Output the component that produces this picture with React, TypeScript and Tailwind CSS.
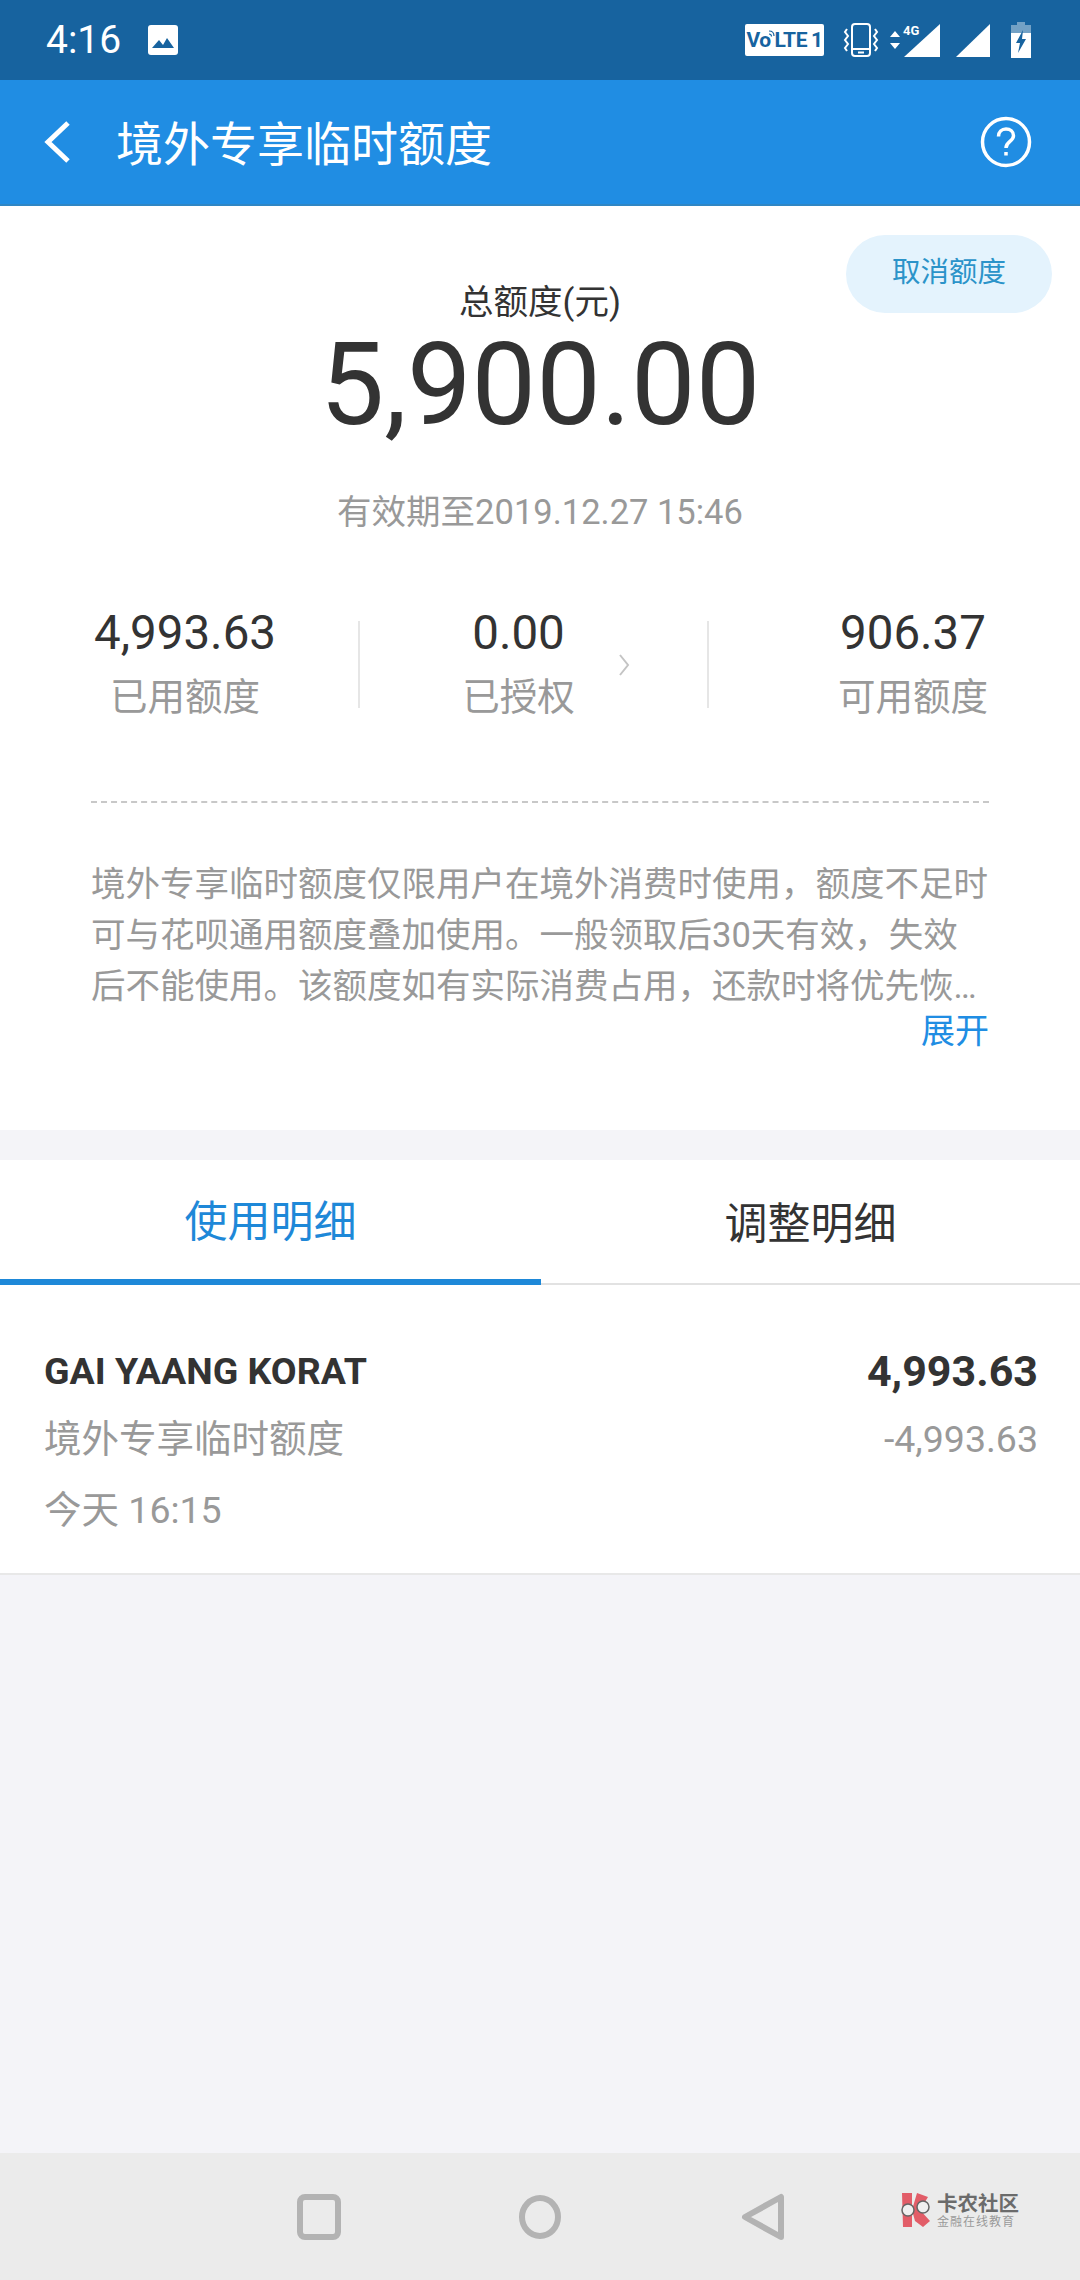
import React from "react";

const font = { fontFamily: "Roboto, 'Noto Sans CJK SC', sans-serif" };

function StatusIcons() {
  return (
    <div className="flex items-center gap-[13px]">
      <div className="flex h-[32px] w-[79px] items-center justify-center rounded-[2px] bg-white text-[21px] leading-none font-bold tracking-[-0.5px] text-[#17639f]">
        <span>Vo</span>
        <svg width="6" height="10" viewBox="0 0 6 10" fill="none" stroke="#17639f" strokeWidth="1.200" className="-mt-[10px] -ml-[2px]">
          <path d="M0 1c3 0 5 2 5 5" />
          <path d="M0 4c1.500 0 2.500 1 2.500 2.500" />
        </svg>
        <span>LTE</span>
        <span className="ml-[4px]">1</span>
      </div>
      <svg width="36" height="36" viewBox="0 0 36 36" fill="none" stroke="white" strokeWidth="2" className="ml-[6px]">
        <rect x="9" y="2" width="18" height="32" rx="3" />
        <path d="M9 27h18" />
        <path d="M15 30.500h6" />
        <path d="M4 7 2 10l3 4-3 4 3 4-3 4 2 3" />
        <path d="M32 7l2 3-3 4 3 4-3 4 3 4-2 3" />
      </svg>
      <svg width="52" height="36" viewBox="4 0 52 36" className="-ml-[2px]">
        <path d="M9 9l5 6H4zM9 27l5-6H4z" fill="white" />
        <path d="M54 2v33H18z" fill="white" />
        <text x="17" y="13" fontSize="13" fontWeight="700" fill="white" fontFamily="Roboto, sans-serif">
          4G
        </text>
      </svg>
      <svg width="36" height="36" viewBox="0 0 36 36">
        <path d="M35 2v33H1z" fill="white" />
      </svg>
      <svg width="22" height="36" viewBox="0 0 22 36" className="ml-[6px]">
        <path d="M7 0h8v3h6v33H1V3h6z" fill="white" fillOpacity="0.4" />
        <path d="M1 11h20v25H1z" fill="white" />
        <path d="M13 8 6 21h4l-2 10 8-14h-4z" fill="#17639f" />
      </svg>
    </div>
  );
}

function Stat({ value, label }: { value: string; label: string }) {
  return (
    <div className="flex flex-col items-center">
      <div className="text-[47.500px] leading-[60px] text-[#333333]">{value}</div>
      <div className="text-[37.500px] leading-[68px] text-[#999999]">{label}</div>
    </div>
  );
}

export default function App() {
  return (
    <div className="flex h-[2280px] w-[1080px] flex-col bg-[#f4f4f8]" style={font}>
      <div className="flex h-[80px] items-center justify-between bg-[#17639f] pr-[48px] pl-[46px]">
        <div className="flex items-center gap-[26px]">
          <span className="text-[39px] leading-none text-white">4:16</span>
          <svg width="32" height="32" viewBox="0 0 32 32">
            <rect x="1" y="1" width="30" height="30" rx="3" fill="white" />
            <path d="M5 24l7-8 4 5 4-7 7 10z" fill="#17639f" />
          </svg>
        </div>
        <StatusIcons />
      </div>

      <div className="flex h-[126px] items-center justify-between border-b-2 border-[#2f86c4] bg-[#208de3] pr-[48px] pl-[42px]">
        <div className="flex items-center">
          <svg width="30" height="44" viewBox="0 0 30 44" fill="none" stroke="white" strokeWidth="5">
            <path d="M26 3 6 22l20 19" />
          </svg>
          <span className="mt-[4px] ml-[44px] text-[47px] leading-none text-white">境外专享临时额度</span>
        </div>
        <svg width="52" height="52" viewBox="0 0 52 52" fill="none" stroke="white" strokeWidth="3.500">
          <circle cx="26" cy="26" r="23.500" />
          <path d="M18.500 20.500c0-4.500 3.300-7.500 7.500-7.500s7.500 2.800 7.500 6.800c0 5.700-7.500 5.700-7.500 12.200" />
          <path d="M26 36v3.500" />
        </svg>
      </div>

      <div className="relative flex h-[924px] flex-col bg-white">
        <div className="absolute top-[29px] right-[28px] flex h-[78px] w-[206px] items-center justify-center rounded-full bg-[#e4f3fd] pb-[2px] text-[28.500px] leading-none text-[#2b93c9]">
          取消额度
        </div>
        <div className="mt-[74px] text-center text-[34.500px] leading-[44px] text-[#333333]">总额度(元)</div>
        <div className="mt-[2px] text-center text-[115px] leading-[118px] font-normal text-[#333333]">5,900.00</div>
        <div className="mt-[46px] text-center text-[34.500px] leading-[44px] text-[#999999]">有效期至2019.12.27 15:46</div>

        <div className="mt-[69px] flex h-[128px] pr-[92px] pl-[95px]">
          <div className="w-[180px]">
            <Stat value="4,993.63" label="已用额度" />
          </div>
          <div className="mb-[5px] ml-[83px] h-[87px] w-[2px] self-center bg-[#e6e6e6]" />
          <div className="relative flex w-[347px] justify-center pr-[30px]">
            <Stat value="0.00" label="已授权" />
            <svg
              width="12"
              height="24"
              viewBox="0 0 12 24"
              fill="none"
              stroke="#c4c4c4"
              strokeWidth="2"
              className="absolute top-[50px] left-[258px]"
            >
              <path d="M2 2l8 10-8 10" />
            </svg>
          </div>
          <div className="mb-[5px] h-[87px] w-[2px] self-center bg-[#e6e6e6]" />
          <div className="flex flex-1 justify-end">
            <Stat value="906.37" label="可用额度" />
          </div>
        </div>

        <div className="mx-[91px] mt-[70px] border-t-2 border-dashed border-[#c8c8c8]" />

        <div className="mx-[91px] mt-[56px] text-[34.500px] leading-[51px] text-[#999999]">
          <div>
            境外专享临时额度仅限用户在境外消费时使用，额度不足时可与花呗通用额度叠加使用。一般领取后30天有效，失效后不能使用。该额度如有实际消费占用，还款时将优先恢…
          </div>
          <div className="text-right text-[34px] leading-[39px] text-[#208de3]">展开</div>
        </div>
      </div>

      <div className="mt-[30px] flex h-[125px] border-b-2 border-[#e2e2e2] bg-white">
        <div className="-mb-[2px] flex w-[541px] items-center justify-center border-b-[6px] border-[#1e88d8] pt-[6px] text-[43px] leading-none text-[#1e88d8]">
          使用明细
        </div>
        <div className="flex flex-1 items-center justify-center pt-[6px] text-[43px] leading-none text-[#333333]">调整明细</div>
      </div>

      <div className="flex h-[290px] flex-col border-b-2 border-[#e8e8e8] bg-white px-[44px] pt-[61px]">
        <div className="flex items-center justify-between text-[37.500px] leading-[50px] font-bold text-[#333333]">
          <span>GAI YAANG KORAT</span>
          <span className="-mr-[2px] text-[43px]">4,993.63</span>
        </div>
        <div className="mt-[18px] flex items-center justify-between text-[37.500px] leading-[50px] text-[#999999]">
          <span>境外专享临时额度</span>
          <span className="-mr-[2px] text-[37.500px]">-4,993.63</span>
        </div>
        <div className="mt-[21px] text-[37.500px] leading-[50px] text-[#999999]">今天 16:15</div>
      </div>

      <div className="flex-1" />

      <div className="relative flex h-[127px] items-center bg-[#ebebeb]">
        <svg width="44" height="46" viewBox="0 0 44 46" fill="none" stroke="#b3b3b3" strokeWidth="6" className="ml-[297px]">
          <rect x="3" y="3" width="38" height="40" rx="5" />
        </svg>
        <svg width="44" height="46" viewBox="0 0 44 46" fill="none" stroke="#b3b3b3" strokeWidth="6" className="ml-[177px]">
          <ellipse cx="22" cy="23" rx="18" ry="19" />
        </svg>
        <svg width="44" height="48" viewBox="0 0 44 48" fill="none" stroke="#b3b3b3" strokeWidth="6" strokeLinejoin="round" className="ml-[179px]">
          <path d="M40 4v40L4 24z" />
        </svg>
        <div className="absolute top-[40px] left-[899px] flex items-start gap-[6px]">
          <svg width="32" height="34" viewBox="0 0 32 34">
            <path d="M3 0h10v34H4zM13 17l5-17 11 4-8 13 10 11-7 6-8-6z" fill="#e25d68" />
            <circle cx="9" cy="17" r="6" fill="#f0f0f0" stroke="#666666" strokeWidth="1.500" />
            <circle cx="24" cy="14" r="6" fill="#f0f0f0" stroke="#666666" strokeWidth="1.500" />
          </svg>
          <div className="flex flex-col">
            <span className="text-[20.500px] leading-[22px] font-bold text-[#6b6b6b]">卡农社区</span>
            <span className="text-[12px] leading-[14px] tracking-[1px] whitespace-nowrap text-[#9a9a9a]">金融在线教育</span>
          </div>
        </div>
      </div>
    </div>
  );
}
